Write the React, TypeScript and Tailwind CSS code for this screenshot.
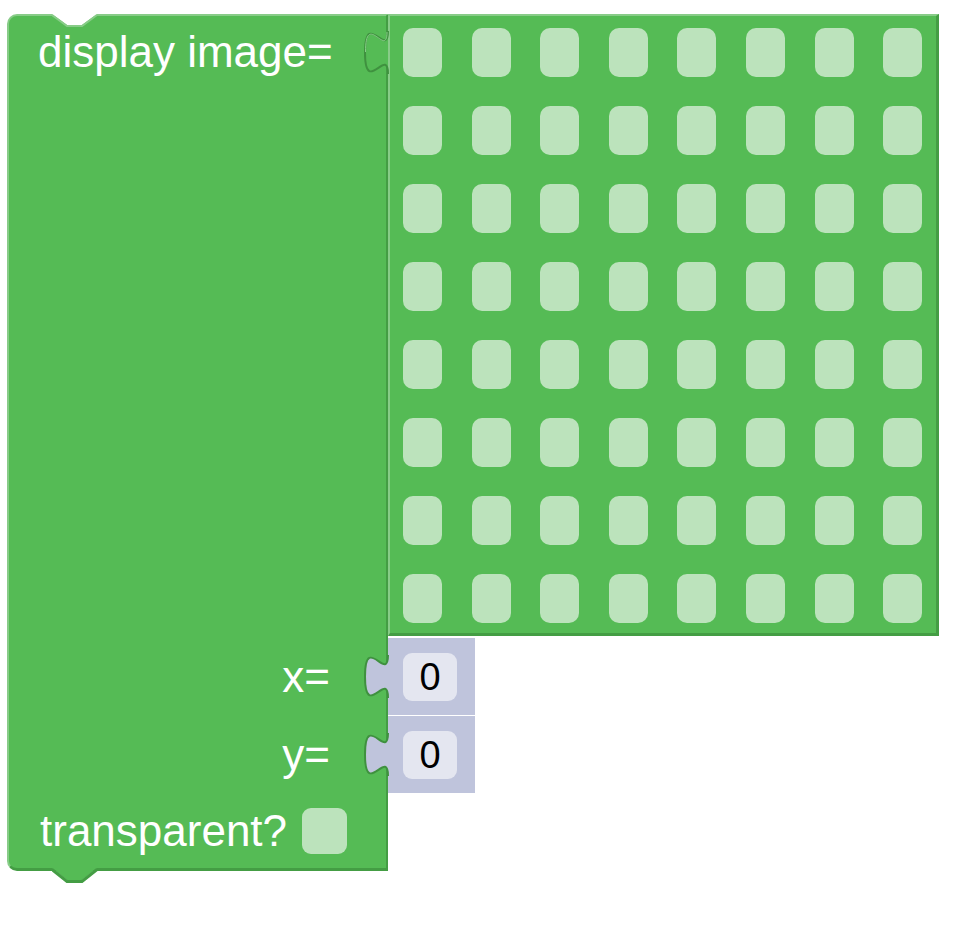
import React from "react";

const font = { fontFamily: '"Liberation Sans", Arial, sans-serif' };

// puzzle tab, Blockly geras shape scaled ~2.87x
const TAB = "M26,2 c0,28.7 -23,-23 -23,21.5 s23,-7.2 23,21.5";

function NumberInput({ value }: { value: string }) {
  return (
    <div className="relative w-[87px] h-[77px] bg-[#bfc4dc] pl-[15px] pt-[15px]">
      <svg width="28" height="50" className="absolute left-[-26px] top-[15px]">
        <path d={TAB + " Z"} fill="#bfc4dc" />
        <path d={TAB} fill="none" stroke="#3f913f" strokeWidth="2" />
      </svg>
      <div className="w-[54px] h-[48px] rounded-[9px] bg-[#e4e6f0] flex items-center justify-center text-[38px] leading-none text-black">
        {value}
      </div>
    </div>
  );
}

export default function App() {
  const cells = Array.from({ length: 64 }, (_, i) => i);

  return (
    <div className="w-[955px] h-[934px] bg-white pt-[14px] pl-[7px] flex items-start" style={font}>
      {/* Main block */}
      <div className="relative w-[381px] flex flex-col bg-[#55bb55] rounded-l-[10px] border-t-2 border-l-2 border-b-[3px] border-r-2 border-t-[#88cc88] border-l-[#88cc88] border-b-[#449d44] border-r-[#449d44] text-white text-[44px] leading-[44px]">
        {/* top notch */}
        <svg width="48" height="14" className="absolute left-[43px] top-[-2px]">
          <path d="M0,0 L15,11 L30,11 L45,0 Z" fill="#ffffff" />
          <polyline points="0,1 15,12 30,12 45,1" fill="none" stroke="#88cc88" strokeWidth="2" />
        </svg>
        {/* bottom tab */}
        <svg width="48" height="16" className="absolute left-[43px] top-full">
          <path d="M0,0 L45,0 L30,12 L15,12 Z" fill="#55bb55" />
          <polyline points="0,1.5 15,13.5 30,13.5 45,1.5" fill="none" stroke="#449d44" strokeWidth="3" />
        </svg>

        <div className="h-[622px] pl-[29px] pt-[14px]">display image=</div>
        <div className="h-[78px] flex items-center justify-end pr-[56px]">x=</div>
        <div className="h-[78px] flex items-center justify-end pr-[56px]">y=</div>
        <div className="h-[74px] flex items-center pl-[31px] gap-[15px]">
          <span>transparent?</span>
          <div className="w-[45px] h-[46px] rounded-[9px] bg-[#bce3bc]" />
        </div>
      </div>

      {/* Inputs column */}
      <div className="flex flex-col">
        <div className="relative w-[551px] h-[622px] bg-[#55bb55] border-t-2 border-l-2 border-b-[3px] border-r-[3px] border-t-[#88cc88] border-l-[#88cc88] border-b-[#449d44] border-r-[#449d44] pl-[13px] pt-[12px]">
          <svg width="28" height="50" className="absolute left-[-28px] top-[13px]">
            <path d={TAB + " Z"} fill="#55bb55" />
            <path d={TAB} fill="none" stroke="#3f913f" strokeWidth="2" />
            <path d="M25,3 c0,27 -21.5,-22 -21.5,20" fill="none" stroke="#88cc88" strokeWidth="1" />
          </svg>
          <div className="grid grid-cols-[repeat(8,39px)] gap-x-[29.6px] gap-y-[29px]">
            {cells.map((i) => (
              <div key={i} className="w-[39px] h-[49px] rounded-[10px] bg-[#bce3bc]" />
            ))}
          </div>
        </div>
        <div className="mt-[2px]">
          <NumberInput value="0" />
        </div>
        <div className="mt-[1px]">
          <NumberInput value="0" />
        </div>
      </div>
    </div>
  );
}
